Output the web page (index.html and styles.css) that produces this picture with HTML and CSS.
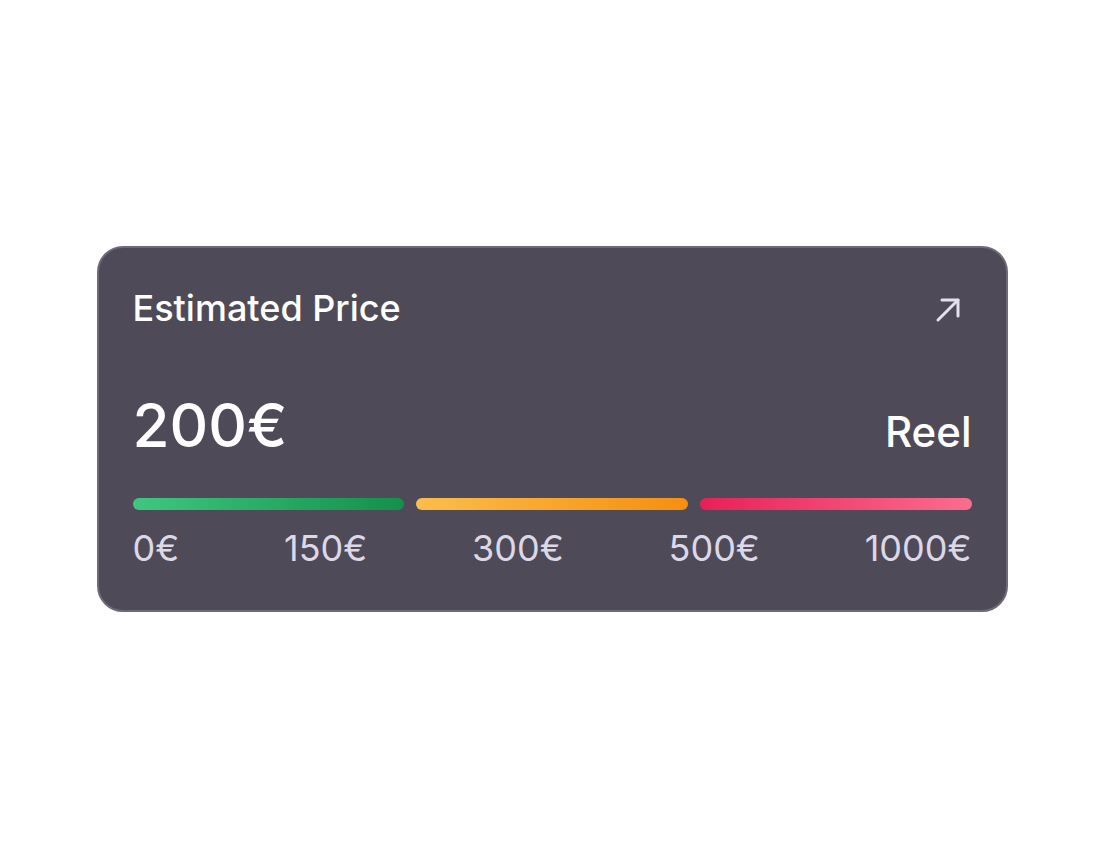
FILE: index.html
```html
<!DOCTYPE html>
<html lang="en">
<head>
<meta charset="utf-8">
<title>Estimated Price</title>
<link rel="stylesheet" href="styles.css">
</head>
<body>
<div class="card">
  <div class="card-header">
    <h2 class="title">Estimated Price</h2>
    <svg class="arrow" width="28" height="28" viewBox="0 0 28 28" fill="none" stroke="currentColor" stroke-width="3" stroke-linecap="round" stroke-linejoin="round">
      <path d="M4 24 L24 4"/>
      <path d="M8 4 H24 V20"/>
    </svg>
  </div>
  <div class="price-row">
    <span class="price">200€</span>
    <span class="type">Reel</span>
  </div>
  <div class="bars">
    <div class="bar bar-green"></div>
    <div class="bar bar-orange"></div>
    <div class="bar bar-red"></div>
  </div>
  <div class="labels">
    <span>0€</span>
    <span>150€</span>
    <span>300€</span>
    <span>500€</span>
    <span>1000€</span>
  </div>
</div>
</body>
</html>
```

FILE: styles.css
```css
* { box-sizing: border-box; }
html, body { margin: 0; padding: 0; }
body {
  background: #ffffff;
  min-height: 100vh;
  display: flex;
  align-items: center;
  justify-content: center;
  font-family: Inter, "Noto Sans", sans-serif;
}
.card {
  width: 911px;
  background: #4f4a58;
  border: 2px solid #6f6a7a;
  border-radius: 26px;
  padding: 38px 34px 42px 34px;
  color: #ffffff;
}
.card-header {
  display: flex;
  justify-content: space-between;
  align-items: center;
  height: 44px;
}
.title {
  margin: 0;
  font-size: 36px;
  font-weight: 500;
  line-height: 44px;
}
.arrow {
  color: #e4e0f0;
  margin-right: 10px;
  margin-top: 4px;
}
.price-row {
  display: flex;
  justify-content: space-between;
  align-items: baseline;
  margin-top: 59px;
  height: 72px;
}
.price {
  font-size: 60px;
  line-height: 72px;
  font-weight: 500;
}
.type {
  font-size: 42px;
  font-weight: 500;
}
.bars {
  display: flex;
  gap: 12px;
  margin-top: 37px;
}
.bar {
  flex: 1;
  height: 12px;
  border-radius: 6px;
}
.bar-green { background: linear-gradient(90deg, #3fc77f, #13904b); }
.bar-orange { background: linear-gradient(90deg, #fbbd4c, #f58f10); }
.bar-red { background: linear-gradient(90deg, #e8205a, #fb6d8e); }
.labels {
  display: flex;
  justify-content: space-between;
  margin-top: 18px;
  font-size: 36px;
  line-height: 40px;
  color: #dcd8e8;
}
```
